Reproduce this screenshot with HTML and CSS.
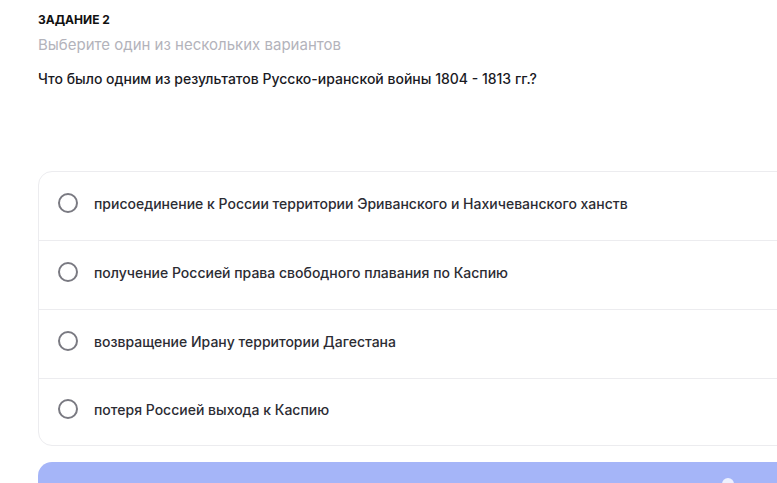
FILE: index.html
```html
<!DOCTYPE html>
<html lang="ru">
<head>
  <meta charset="UTF-8" />
  <title>Задание 2</title>
  <link rel="stylesheet" href="styles.css">
</head>
<body>
  <div class="task">
    <h3 class="task-label">Задание 2</h3>
    <p class="task-hint">Выберите один из нескольких вариантов</p>
    <p class="task-question">Что было одним из результатов Русско-иранской войны 1804 - 1813 гг.?</p>

    <div class="options">
      <label class="option"><span class="radio"></span><span>присоединение к России территории Эриванского и Нахичеванского ханств</span></label>
      <label class="option"><span class="radio"></span><span>получение Россией права свободного плавания по Каспию</span></label>
      <label class="option"><span class="radio"></span><span>возвращение Ирану территории Дагестана</span></label>
      <label class="option"><span class="radio"></span><span>потеря Россией выхода к Каспию</span></label>
    </div>

    <button class="submit"><span class="submit-icon"></span></button>
  </div>
</body>
</html>
```

FILE: styles.css
```css
body {
  margin: 0;
  font-family: Inter, "Noto Sans", sans-serif;
  background: #fff;
  color: #1d1d22;
  overflow: hidden;
}
.task {
  padding: 12px 0 0 38px;
  width: 800px;
}
.task-label {
  margin: 0;
  font-size: 12px;
  font-weight: 700;
  text-transform: uppercase;
  line-height: 15px;
  color: #111;
}
.task-hint {
  margin: 9px 0 0;
  font-size: 15px;
  line-height: 18px;
  color: #b3b3bb;
}
.task-question {
  margin: 16px 0 0;
  font-size: 14px;
  font-weight: 500;
  line-height: 18px;
  color: #1a1a1f;
}
/* список вариантов ответа */
.options {
  margin-top: 83px;
  border: 1px solid #ececef;
  border-radius: 14px;
  overflow: hidden;
}
.option {
  display: flex;
  align-items: center;
  gap: 16px;
  height: 69px;
  padding: 0 19px 6px;
  font-size: 14px;
  font-weight: 500;
  color: #2c2c33;
  border-top: 1px solid #ececef;
  box-sizing: border-box;
  cursor: pointer;
}
.option:first-child {
  border-top: none;
  height: 68px;
}
.option:last-child {
  height: 67px;
}
.radio {
  width: 16px;
  height: 16px;
  border: 2.5px solid #7a7a82;
  border-radius: 50%;
  flex-shrink: 0;
}
.submit {
  display: block;
  width: 100%;
  height: 60px;
  margin-top: 16px;
  background: #a5b5f8;
  border: none;
  border-radius: 14px;
  position: relative;
}
.submit-icon {
  position: absolute;
  left: 684px;
  top: 16px;
  width: 12px;
  height: 12px;
  border-radius: 50%;
  background: #eef1ff;
}
```
